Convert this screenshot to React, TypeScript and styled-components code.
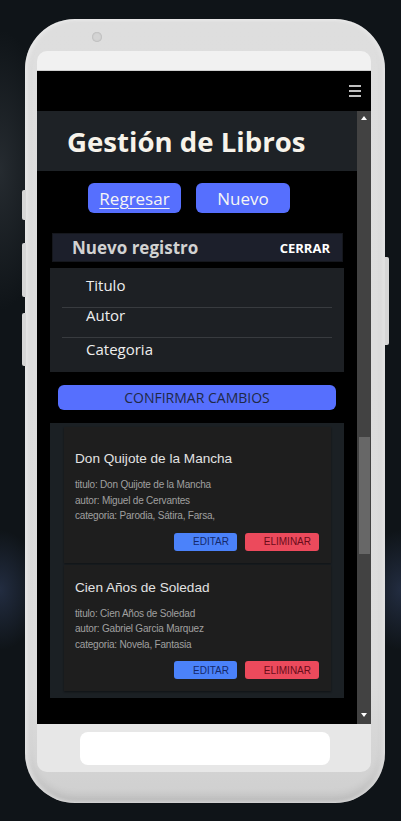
import React from "react";
import styled, { createGlobalStyle } from "styled-components";

const Global = createGlobalStyle`
  html, body { margin: 0; padding: 0; }
  body { background: #0f1418; overflow: hidden; }
  * { box-sizing: border-box; }
`;

const Page = styled.div`
  width: 401px;
  height: 821px;
  padding: 19px 16px 0 25px;
  background:
    radial-gradient(ellipse 40px 60px at 0px 590px, rgba(70, 90, 140, 0.35), transparent),
    radial-gradient(ellipse 40px 60px at 401px 590px, rgba(70, 90, 140, 0.35), transparent),
    radial-gradient(ellipse 50px 140px at 0px 170px, rgba(60, 66, 72, 0.5), transparent),
    #0f1418;
  overflow: hidden;
`;

const Phone = styled.div`
  position: relative;
  width: 360px;
  height: 784px;
  border-radius: 50px;
  padding: 32px 14px 0 12px;
  display: flex;
  flex-direction: column;
  background: linear-gradient(180deg, #dedede 0%, #dcdcdc 85%, #cfcfcf 100%);
  box-shadow: inset 3px 0 4px rgba(255,255,255,0.5), inset -3px 0 4px rgba(255,255,255,0.4),
    inset 0 -6px 10px rgba(0,0,0,0.12);
`;

const Camera = styled.div`
  position: absolute;
  left: 67px;
  top: 13px;
  width: 10px;
  height: 10px;
  border-radius: 50%;
  background: #d4d4d4;
  box-shadow: inset 0 0 2px rgba(0,0,0,0.25);
`;

const SideKey = styled.div<{ $side: "left" | "right"; $top: number; $h: number }>`
  position: absolute;
  top: ${(p) => p.$top}px;
  height: ${(p) => p.$h}px;
  width: 4px;
  ${(p) => (p.$side === "left" ? "left: -3px; border-radius: 2px 0 0 2px;" : "right: -4px; border-radius: 0 2px 2px 0;")}
  background: #d6d6d6;
`;

const TopStrip = styled.div`
  height: 20px;
  background: #f1f1f1;
  border-radius: 10px 10px 0 0;
  border-bottom: 1px solid #cfcfcf;
`;

const Screen = styled.div`
  height: 653px;
  background: #000;
  display: flex;
  flex-direction: column;
`;

const TopBar = styled.div`
  height: 40px;
  display: flex;
  justify-content: flex-end;
  align-items: center;
  padding-right: 10px;
`;

const ScreenBody = styled.div`
  flex: 1;
  display: flex;
  min-height: 0;
`;

const Content = styled.div`
  width: 320px;
  display: flex;
  flex-direction: column;
  font-family: "Open Sans", "Liberation Sans", sans-serif;
`;

const Scrollbar = styled.div`
  width: 14px;
  background: #424242;
  display: flex;
  flex-direction: column;
  align-items: center;
  position: relative;
`;

const Arrow = styled.div<{ $down?: boolean }>`
  width: 0;
  height: 0;
  border-left: 3px solid transparent;
  border-right: 3px solid transparent;
  ${(p) => (p.$down ? "border-top: 4px solid #fff;" : "border-bottom: 4px solid #fff;")}
  margin-top: ${(p) => (p.$down ? "auto" : "5px")};
  margin-bottom: ${(p) => (p.$down ? "7px" : "0")};
`;

const Thumb = styled.div`
  width: 11px;
  height: 117px;
  margin-top: 317px;
  margin-left: 1px;
  background: #676767;
`;

const Header = styled.div`
  height: 60px;
  background: #1e2226;
  display: flex;
  align-items: center;
  padding-left: 30px;
`;

const Title = styled.h1`
  margin: 0;
  font-size: 27.6px;
  font-weight: 700;
  color: #f7f3ea;
`;

const ButtonRow = styled.div`
  display: flex;
  gap: 15px;
  margin-top: 12px;
  padding-left: 51px;
`;

const NavButton = styled.button<{ $w: number; $underline?: boolean }>`
  width: ${(p) => p.$w}px;
  height: 30px;
  border: none;
  border-radius: 6px;
  background: #566ffe;
  color: #f5f5f5;
  font-family: "Open Sans", sans-serif;
  font-size: 17px;
  padding: 0;
  text-decoration: ${(p) => (p.$underline ? "underline" : "none")};
  text-underline-offset: 3px;
  text-decoration-thickness: 1px;
`;

const RegistroBar = styled.div`
  margin: 20px 0 0 15px;
  width: 291px;
  height: 29px;
  background: #1c1f2b;
  border: 1px solid #15171d;
  display: flex;
  align-items: center;
  justify-content: space-between;
  padding: 0 12px 0 19px;
`;

const RegistroTitle = styled.span`
  font-size: 17px;
  font-weight: 700;
  color: #d2d2d2;
`;

const Cerrar = styled.span`
  font-size: 13px;
  font-weight: 700;
  color: #ffffff;
`;

const FormPanel = styled.div`
  margin: 6px 0 0 13px;
  width: 294px;
  height: 104px;
  background: #1d2024;
  padding-top: 8px;
  display: flex;
  flex-direction: column;
`;

const FieldLabel = styled.label<{ $mt: number }>`
  display: block;
  margin-top: ${(p) => p.$mt}px;
  padding-left: 36px;
  font-size: 15px;
  line-height: 18px;
  color: #eeeeee;
`;

const Separator = styled.div`
  height: 1px;
  margin: 13px 12px 0;
  background: #383b3f;
`;

const ConfirmButton = styled.button`
  margin: 13px 0 0 21px;
  width: 278px;
  height: 25px;
  border: none;
  border-radius: 6px;
  background: #566ffe;
  color: #1f2946;
  font-family: "Open Sans", sans-serif;
  font-size: 14px;
  padding: 0;
`;

const CardsPanel = styled.div`
  margin: 13px 0 0 13px;
  width: 294px;
  height: 275px;
  background: #1b2024;
  padding: 4px 13px 0 14px;
  display: flex;
  flex-direction: column;
  gap: 2px;
`;

const Card = styled.div<{ $pt: number }>`
  background: #1e1e1e;
  padding: ${(p) => p.$pt}px 12px 12px 11px;
  box-shadow: 0 1px 2px rgba(0,0,0,0.45);
  font-family: "Liberation Sans", Arial, sans-serif;
  display: flex;
  flex-direction: column;
`;

const CardTitle = styled.div`
  font-size: 13.6px;
  line-height: 18px;
  color: #e2e2e2;
  margin-bottom: 9px;
`;

const Detail = styled.div`
  font-size: 10px;
  line-height: 15.5px;
  color: #a0a0a0;
  letter-spacing: -0.2px;
`;

const Actions = styled.div`
  display: flex;
  justify-content: flex-end;
  gap: 8px;
  margin-top: 9px;
`;

const ActionButton = styled.button<{ $kind: "edit" | "delete" }>`
  width: ${(p) => (p.$kind === "edit" ? 63 : 74)}px;
  height: 18px;
  border: none;
  border-radius: 3px;
  padding: 0 8px 0 12px;
  background: ${(p) => (p.$kind === "edit" ? "#4b82fa" : "#ec4a5c")};
  color: ${(p) => (p.$kind === "edit" ? "#14286a" : "#6a0c1a")};
  font-family: "Liberation Sans", Arial, sans-serif;
  font-size: 10px;
  text-align: right;
`;

const BottomStrip = styled.div`
  height: 48px;
  background: #e7e7e7;
  border-radius: 0 0 10px 10px;
  display: flex;
  padding: 8px 0 0 43px;
`;

const HomeButton = styled.div`
  width: 250px;
  height: 33px;
  border-radius: 8px;
  background: #ffffff;
`;

const Hamburger = () => (
  <svg width="12" height="12" viewBox="0 0 12 12">
    <path d="M0 1h12M0 6h12M0 11h12" stroke="#fff" strokeWidth="1.3" />
  </svg>
);

const books = [
  {
    title: "Don Quijote de la Mancha",
    autor: "Miguel de Cervantes",
    categoria: "Parodia, Sátira, Farsa,",
    pt: 23,
  },
  {
    title: "Cien Años de Soledad",
    autor: "Gabriel Garcia Marquez",
    categoria: "Novela, Fantasia",
    pt: 14,
  },
];

export default function App() {
  return (
    <Page>
      <Global />
      <Phone>
        <Camera />
        <SideKey $side="left" $top={171} $h={30} />
        <SideKey $side="left" $top={224} $h={54} />
        <SideKey $side="left" $top={294} $h={53} />
        <SideKey $side="right" $top={238} $h={88} />
        <TopStrip />
        <Screen>
          <TopBar>
            <Hamburger />
          </TopBar>
          <ScreenBody>
            <Content>
              <Header>
                <Title>Gestión de Libros</Title>
              </Header>
              <ButtonRow>
                <NavButton $w={93} $underline>Regresar</NavButton>
                <NavButton $w={94}>Nuevo</NavButton>
              </ButtonRow>
              <RegistroBar>
                <RegistroTitle>Nuevo registro</RegistroTitle>
                <Cerrar>CERRAR</Cerrar>
              </RegistroBar>
              <FormPanel>
                <FieldLabel $mt={0}>Titulo</FieldLabel>
                <Separator />
                <FieldLabel $mt={-2}>Autor</FieldLabel>
                <Separator />
                <FieldLabel $mt={2}>Categoria</FieldLabel>
              </FormPanel>
              <ConfirmButton>CONFIRMAR CAMBIOS</ConfirmButton>
              <CardsPanel>
                {books.map((b) => (
                  <Card key={b.title} $pt={b.pt}>
                    <CardTitle>{b.title}</CardTitle>
                    <Detail>titulo: {b.title}</Detail>
                    <Detail>autor: {b.autor}</Detail>
                    <Detail>categoria: {b.categoria}</Detail>
                    <Actions>
                      <ActionButton $kind="edit">EDITAR</ActionButton>
                      <ActionButton $kind="delete">ELIMINAR</ActionButton>
                    </Actions>
                  </Card>
                ))}
              </CardsPanel>
            </Content>
            <Scrollbar>
              <Arrow />
              <Thumb />
              <Arrow $down />
            </Scrollbar>
          </ScreenBody>
        </Screen>
        <BottomStrip>
          <HomeButton />
        </BottomStrip>
      </Phone>
    </Page>
  );
}
